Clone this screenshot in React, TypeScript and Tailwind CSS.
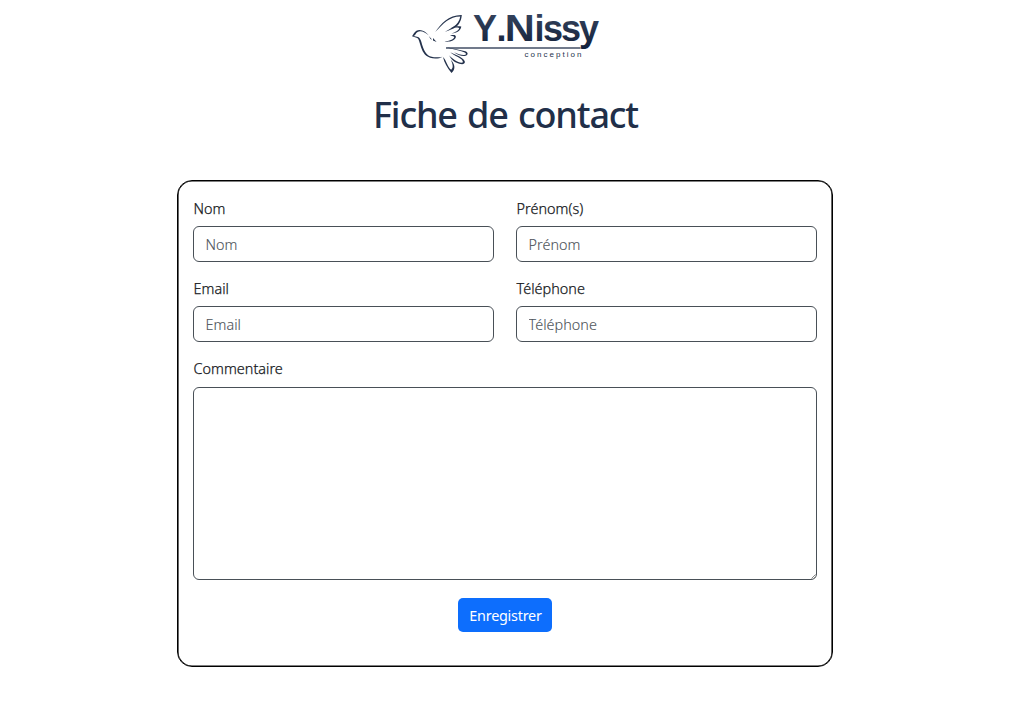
import React from "react";

const label = "block h-[23px] whitespace-nowrap pl-[0.5px] text-[14.4px] leading-[23px] font-light tracking-[0.03px] text-[#15181b] [-webkit-text-stroke:0.25px]";
const control =
  "block w-full rounded-[6px] border border-[#495057] bg-white px-[11.5px] text-[14.4px] font-light tracking-[0.03px] text-[#212529] outline-none placeholder:text-[#4d5359] placeholder:opacity-100 [-webkit-text-stroke:0.1px]";

function Field({ name, placeholder }: { name: string; placeholder: string }) {
  return (
    <div>
      <label className={label}>{name}</label>
      <input className={`${control} mt-[6px] h-[36px]`} placeholder={placeholder} />
    </div>
  );
}

function Logo() {
  return (
    <svg width="200" height="70" viewBox="408 8 200 70" className="block">
      <defs>
        <linearGradient id="ink" x1="0" y1="14" x2="0" y2="48" gradientUnits="userSpaceOnUse">
          <stop offset="0" stopColor="#34425c" />
          <stop offset="1" stopColor="#13213b" />
        </linearGradient>
      </defs>
      <g fill="#24324c">
        <path d="M412 36.2C413.5 34.4 414.2 32 416.4 30.7C420.6 28.5 425.5 31.2 428.8 35.4C425.2 32.5 421 30.2 417.6 32C415.4 33.3 415.7 35.1 413.7 35.9L418 37.1C420.6 38.2 421.4 42 422.4 45.6C424.3 52.1 427.8 57.2 434 57.2C437.1 57.3 439.7 57.5 442.5 56.7C439.4 58.8 434.1 59 430.1 57.8C424.2 56 422.1 50.7 420.5 45.6C419.4 42 418.8 38.9 417.3 38.1Z" />
        <path d="M435.2 32C441 23.8 448.4 14.8 461.8 15C461.2 20.8 459.2 25.6 453.5 28.5C450 30.2 447 30.8 444.9 32C449.6 28.1 458.7 26.1 460.3 16.4C449.5 16.5 443.5 23.2 435.2 32Z" />
        <path d="M451 27.7C454.6 26.1 458 25.9 461.3 26.6C460.8 30.8 456.7 33.3 451.5 33.4C455.4 32 458.8 30.6 459.2 27.9C457 27.2 454 27.5 451 27.7Z" />
        <path d="M450 35.1C453 35.3 455.8 33.9 455.9 37C455.2 40.8 449.4 42.2 444.6 41.5C449.2 41 453.6 39.6 454.3 37C453 35.9 451 36 450 35.1Z" />
        <path d="M428.8 36L432.2 39.8L430.5 39ZM433 37.9L436.6 42L433 40.6Z" />
        <path d="M446 47L465.4 51.2C468.6 52.7 468.5 55.3 464.5 55.9C461 56.1 457 54.4 454 52.2C458.8 54.4 464.6 56 466.2 53.9C464.6 50.8 454.5 50.4 446 47Z" />
        <path d="M450.3 52.3C455.6 55.4 463.4 57 464.9 61.8C465.1 65.2 460 64.3 456.6 62.8C451.8 60.8 450.4 57.5 448.9 55.3C452.7 59.4 460.3 64.2 463 62.2C462.9 58 453.8 56 450.3 52.3Z" />
        <path d="M443 57C444.3 62.9 447 67.4 451.5 72.9C455.9 69.4 455.1 64.3 450.8 59.8C453 64.5 453.5 67.8 451.2 69.7C447.5 67.5 446.8 60.9 443 57Z" />
      </g>
      <path d="M446 48H580.5" stroke="#424e65" strokeWidth="1.6" />
      <g fill="url(#ink)" fontFamily="Liberation Sans" fontWeight="700" fontSize="36">
        <text x="473 496.5" y="41">Y.</text>
        <text x="504.8" y="41" textLength="30" lengthAdjust="spacingAndGlyphs">N</text>
        <text x="534.6 543 561 579" y="41">issy</text>
      </g>
      <text x="524.5" y="57" textLength="57" fill="#26344e" fontFamily="Liberation Sans" fontSize="8">conception</text>
    </svg>
  );
}

export default function App() {
  return (
    <main className="flex min-h-[716px] w-full flex-col items-center bg-white pt-2 font-['Noto_Sans',sans-serif]">
      <div className="ml-[5px]"><Logo /></div>
      <h1 className="mt-[12px] h-[50px] whitespace-nowrap text-[36px] font-medium leading-[50px] tracking-[-1.15px] [word-spacing:2px] text-[#212f49]">Fiche de contact</h1>
      <form className="mt-[40px] mr-px flex h-[487px] w-[656px] flex-col rounded-[15px] border border-black px-[15px] pt-[16px] shadow-[inset_0_0_0_0.6px_#000]" onSubmit={(e) => e.preventDefault()}>
        <div className="grid grid-cols-[301px_301px] justify-between gap-y-[15px]">
          <Field name="Nom" placeholder="Nom" />
          <Field name="Prénom(s)" placeholder="Prénom" />
          <Field name="Email" placeholder="Email" />
          <Field name="Téléphone" placeholder="Téléphone" />
        </div>
        <label className={`${label} mt-[15px]`}>Commentaire</label>
        <div className="relative mt-[7px]">
          <textarea className={`${control} h-[193px] resize-none`} />
          <svg className="pointer-events-none absolute bottom-[1px] right-[1px]" width="5" height="5" viewBox="0 0 5 5" stroke="#555" strokeWidth="0.7">
            <path d="M0.5 4.5L4.5 0.5M3 4.5L4.5 3" />
          </svg>
        </div>
        <button className="mt-[18px] h-[34px] w-[94px] shrink-0 self-center whitespace-nowrap rounded-[5px] bg-[#0d6efd] pl-px pt-px text-[14.4px] font-normal leading-[33px] tracking-[-0.25px] text-white">Enregistrer</button>
      </form>
    </main>
  );
}
